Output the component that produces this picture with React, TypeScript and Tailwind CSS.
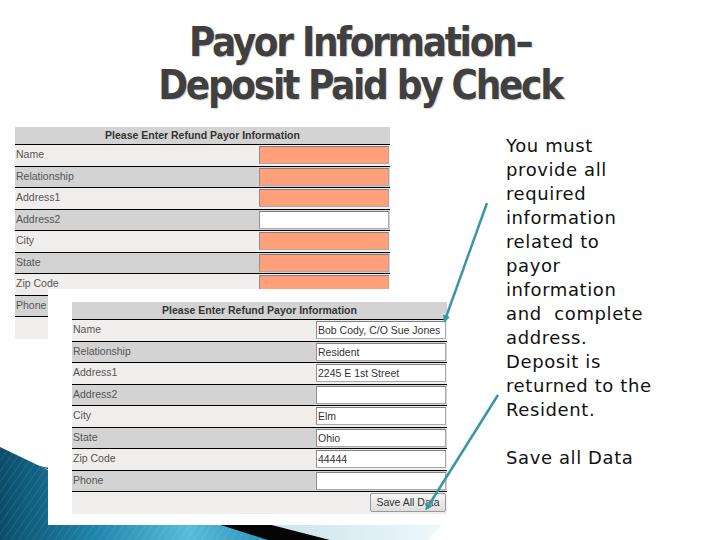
import React from "react";

type Field = { label: string; value: string; required: boolean };

const FIELDS: Field[] = [
  { label: "Name", value: "Bob Cody, C/O Sue Jones", required: true },
  { label: "Relationship", value: "Resident", required: true },
  { label: "Address1", value: "2245 E 1st Street", required: true },
  { label: "Address2", value: "", required: false },
  { label: "City", value: "Elm", required: true },
  { label: "State", value: "Ohio", required: true },
  { label: "Zip Code", value: "44444", required: true },
  { label: "Phone", value: "", required: false },
];

const NOTE = [
  "You must",
  "provide all",
  "required",
  "information",
  "related to",
  "payor",
  "information",
  "and  complete",
  "address.",
  "Deposit is",
  "returned to the",
  "Resident.",
  "",
  "Save all Data",
];

/** The payor form as it appears in the screenshots (empty = salmon required fields). */
function PayorForm({ filled }: { filled: boolean }) {
  return (
    <div className="w-[375px] font-['Liberation_Sans',Arial,sans-serif] text-[10.5px]">
      <div className="h-[18px] flex items-center justify-center bg-[#d3d3d3] border-b border-black font-bold text-[#333]">
        Please Enter Refund Payor Information
      </div>
      {FIELDS.map((f, i) => (
        <div
          key={f.label}
          className={
            "h-[21.5px] flex items-center justify-between border-b border-black " +
            (i % 2 === 0 ? "bg-[#f0eded]" : "bg-[#d3d3d3]")
          }
        >
          <span className="pl-[1px] text-[#555]">{f.label}</span>
          <input
            readOnly
            value={filled ? f.value : ""}
            className={
              "mr-[1px] w-[130px] h-[18px] px-[1px] border border-[#a9a9a9] border-t-[#808080] border-l-[#909090] outline-none text-[10.5px] text-[#333] font-['Liberation_Sans',Arial,sans-serif] " +
              (!filled && f.required ? "bg-[#ffa07a]" : "bg-white")
            }
          />
        </div>
      ))}
      <div className="h-[21.5px] flex items-center justify-end bg-[#f0eded]">
        <button className="mr-[1px] h-[19px] w-[76px] border border-[#9a9a9a] rounded-[2px] bg-gradient-to-b from-[#f6f6f6] to-[#dedede] text-[10.5px] text-[#333]">
          Save All Data
        </button>
      </div>
    </div>
  );
}

function CornerRibbon() {
  return (
    <svg className="absolute left-0 bottom-0" width="460" height="100" viewBox="0 440 460 100">
      <defs>
        <linearGradient id="blue" x1="0" y1="0" x2="270" y2="0" gradientUnits="userSpaceOnUse">
          <stop offset="0" stopColor="#0b4c6a" />
          <stop offset="0.35" stopColor="#1f84ab" />
          <stop offset="0.7" stopColor="#58bcd9" />
          <stop offset="1" stopColor="#2791b7" />
        </linearGradient>
        <linearGradient id="pale" x1="260" y1="0" x2="440" y2="0" gradientUnits="userSpaceOnUse">
          <stop offset="0" stopColor="#c9e3ec" />
          <stop offset="1" stopColor="#eef7fa" />
        </linearGradient>
        <pattern id="hatch" width="6" height="6" patternUnits="userSpaceOnUse" patternTransform="rotate(35)">
          <line x1="0" y1="0" x2="0" y2="6" stroke="#ffffff" strokeOpacity="0.12" strokeWidth="1.5" />
        </pattern>
      </defs>
      <polygon points="40,466 445,522 428,540 300,540" fill="url(#pale)" />
      <polygon points="36,465 330,540 255,540" fill="#050505" />
      <polygon points="0,447 48,470 268,540 0,540" fill="url(#blue)" />
      <polygon points="0,447 48,470 268,540 0,540" fill="url(#hatch)" />
    </svg>
  );
}

function Pointers() {
  return (
    <svg className="absolute inset-0 pointer-events-none" width="720" height="540">
      <defs>
        <marker id="tip" viewBox="0 0 10 10" refX="6" refY="5" markerWidth="3" markerHeight="3" orient="auto">
          <path d="M0,0 L10,5 L0,10 z" fill="#3a96a6" />
        </marker>
      </defs>
      <line x1="487" y1="203" x2="445" y2="320" stroke="#3a96a6" strokeWidth="2.5" markerEnd="url(#tip)" />
      <line x1="498" y1="395" x2="427" y2="508" stroke="#3a96a6" strokeWidth="2.5" markerEnd="url(#tip)" />
    </svg>
  );
}

export default function App() {
  return (
    <div className="relative w-[720px] h-[540px] overflow-hidden bg-white">
      <CornerRibbon />

      <h1 className="pt-[21px] text-center text-[40px] leading-[43px] tracking-[-2.3px] font-bold text-[#404040] font-['DejaVu_Sans_Condensed','DejaVu_Sans',sans-serif] [text-shadow:1px_1px_1px_rgba(0,0,0,0.18)]">
        Payor Information–
        <br />
        Deposit Paid by Check
      </h1>

      <div className="flex">
        <div className="w-[506px] pl-[15px] pt-[20px]">
          <PayorForm filled={false} />
        </div>
        <div className="pt-[27px] font-['DejaVu_Sans',sans-serif] text-[18px] leading-[24px] tracking-[0.6px] text-[#111] whitespace-pre">
          {NOTE.map((line, i) => (
            <div key={i} className="h-[24px]">
              {line}
            </div>
          ))}
        </div>
      </div>

      {/* Second screenshot laid over the first */}
      <div className="absolute left-[48px] top-[289px] w-[407px] bg-white pl-[24px] pt-[13px] pb-[11px]">
        <PayorForm filled />
      </div>

      <Pointers />
    </div>
  );
}
